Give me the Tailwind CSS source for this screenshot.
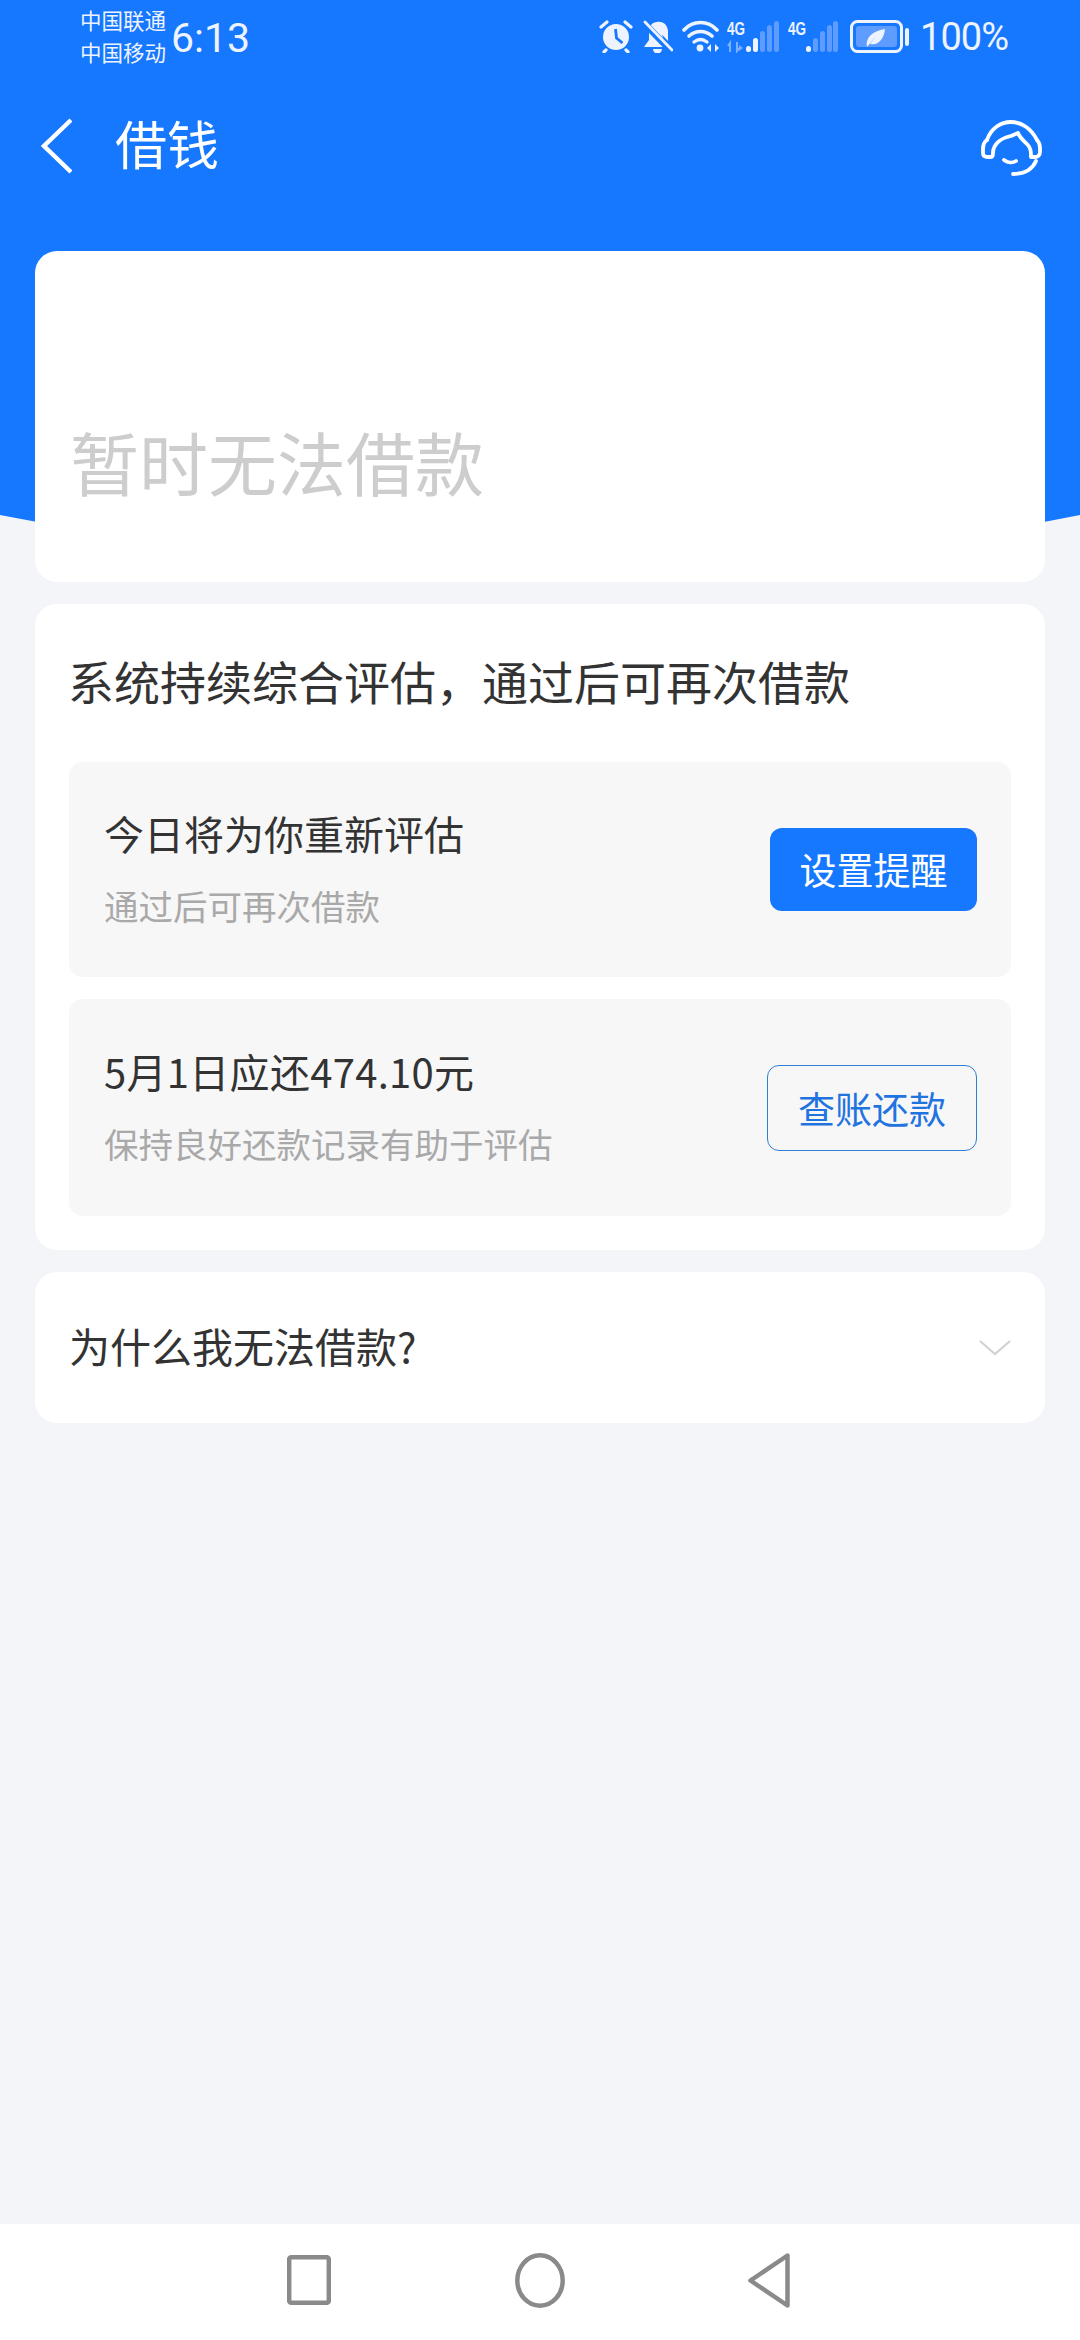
<!DOCTYPE html>
<html lang="zh"><head><meta charset="utf-8"><script src="https://cdn.jsdelivr.net/npm/@tailwindcss/browser@4"></script></head>
<body class="m-0">
<div class="relative w-[1080px] h-[2340px] overflow-hidden bg-[#f4f5f8] font-['Noto_Sans_CJK_SC',sans-serif] flex flex-col">
  <svg class="absolute left-0 top-0" width="1080" height="640" viewBox="0 0 1080 640"><path d="M0 0H1080V515Q540 623 0 515Z" fill="#1677ff"/></svg>

  <div class="relative flex-1 flex flex-col">
    <!-- status bar -->
    <div class="h-[75px] shrink-0 flex items-start pl-[80px] pr-[72px] text-[#eef4ff]">
      <div class="flex flex-col pt-[4px] text-[21.5px] leading-[32px] w-[91px] whitespace-nowrap"><span>中国联通</span><span>中国移动</span></div>
      <span class="font-['Roboto',sans-serif] text-[41px] leading-[44px] mt-[16px]">6:13</span>
      <div class="ml-auto flex items-center h-[34px] mt-[19px]">
        <svg width="34" height="34" viewBox="0 0 34 34" fill="#eef4ff"><circle cx="17" cy="18" r="13"/><path d="M2 8 8 3M32 8 26 3M7 31l-2 2M27 31l2 2" stroke="#eef4ff" stroke-width="3.200" stroke-linecap="round"/><path d="M16.500 10l1 9 6 5" fill="none" stroke="#1677ff" stroke-width="2.800"/></svg>
        <svg class="ml-[10px]" width="30" height="34" viewBox="0 0 30 34" fill="#eef4ff"><path d="M15 3c-6 0-9 4-9 10v8l-5 7h22Z"/><path d="M10 30h9a4.500 4.500 0 0 1-9 0Z"/><path d="M14 3c6-1 11 3 11 10v9L9 5Z"/><path d="M1 4 29 33" stroke="#1677ff" stroke-width="6.500"/><path d="M2 3 29 31" stroke="#eef4ff" stroke-width="2.800" stroke-linecap="round"/></svg>
        <svg class="ml-[9px]" width="38" height="34" viewBox="0 0 38 34" fill="none" stroke="#eef4ff" stroke-linecap="round"><path d="M2 11C11 1 26 1 35 11" stroke-width="3.600"/><path d="M7 17c7-6 16-6 23 0" stroke-width="3.600"/><path d="M12 23c4-3 9-3 13 0" stroke-width="3.400"/><circle cx="18" cy="29" r="3.400" fill="#eef4ff" stroke="none"/><path d="M29 25l-4 4 4 4ZM33 25l4 4-4 4Z" fill="#eef4ff" stroke="none"/></svg>
        <svg class="ml-[7px]" width="52" height="34" viewBox="0 0 52 34"><text x="0" y="16" font-family="Liberation Sans" font-size="18" font-weight="700" fill="#eef4ff" textLength="18" lengthAdjust="spacingAndGlyphs">4G</text><path d="M3 33V24l-2 3M10 23v9l2-3" fill="none" stroke="#7db0ff" stroke-width="2"/><path d="M12 26l4 3-4 3Z" fill="#7db0ff"/><rect x="19" y="27" width="5" height="6" rx="2.500" fill="#eef4ff"/><rect x="26" y="19" width="5" height="14" rx="2.500" fill="#eef4ff"/><rect x="33" y="12" width="5" height="21" rx="2.500" fill="#5e9cff"/><rect x="40" y="6" width="5" height="27" rx="2.500" fill="#5e9cff"/><rect x="47" y="2" width="5" height="31" rx="2.500" fill="#5e9cff"/></svg>
        <svg class="ml-[9px]" width="50" height="34" viewBox="0 0 50 34"><text x="0" y="16" font-family="Liberation Sans" font-size="18" font-weight="700" fill="#eef4ff" textLength="18" lengthAdjust="spacingAndGlyphs">4G</text><rect x="18" y="27" width="5" height="6" rx="2.500" fill="#eef4ff"/><rect x="25" y="19" width="5" height="14" rx="2.500" fill="#5e9cff"/><rect x="32" y="12" width="5" height="21" rx="2.500" fill="#5e9cff"/><rect x="39" y="6" width="5" height="27" rx="2.500" fill="#5e9cff"/><rect x="45" y="2" width="5" height="31" rx="2.500" fill="#5e9cff"/></svg>
        <svg class="ml-[12px]" width="60" height="34" viewBox="0 0 60 34"><rect x="1.500" y="2.500" width="50" height="30" rx="6" fill="none" stroke="#eef4ff" stroke-width="3"/><rect x="6" y="7" width="41" height="21" rx="3" fill="#5e9cff"/><rect x="55" y="9" width="4" height="18" rx="2" fill="#eef4ff"/><path d="M17 28c-2-9 5-16 18-18-1 10-7 17-15 15l6-8-9 11Z" fill="#eef4ff"/></svg>
        <span class="ml-[10px] font-['Roboto',sans-serif] text-[38px] tracking-[-1px] leading-[34px] mt-[2px]">100%</span>
      </div>
    </div>
    <!-- nav -->
    <div class="h-[150px] shrink-0 flex items-center pl-[41px] pr-[38px] text-white">
      <svg class="mb-[8px]" width="31" height="56" viewBox="0 0 31 56" fill="none" stroke="#fff" stroke-width="4.400"><path d="M30 2 3 28l27 26"/></svg>
      <span class="ml-[43px] text-[52px] leading-[76px] mb-[15px]">借钱</span>
      <svg class="ml-auto mb-[5px]" width="61" height="56" viewBox="0 0 61 56" fill="none" stroke="#fff" stroke-width="3.800" stroke-linecap="round" stroke-linejoin="round"><path d="M6 20C10 8 20 2 30 2S50 8 56 20"/><path d="M6 20C3 22 2 25 2 29V33C2 36 4 37 7 37H10C12 37 12 35 12 33C12 24 20 18 30 16L37 13C39 18 44 22 46 24C50 28 50 32 50 37H54C57 37 59 35 59 32V28C59 25 58 22 56 20"/><path d="M23 40C27 43 32 43 35 41"/><path d="M55 41C51 50 44 54 32 54"/></svg>
    </div>
    <!-- cards -->
    <div class="mt-[26px] mx-[35px] flex flex-col">
      <div class="h-[331px] bg-white rounded-[22px] px-[35px] flex items-end pb-[73px]">
        <span class="text-[69px] leading-[96px] text-[#cdcdcd]">暂时无法借款</span>
      </div>
      <div class="mt-[22px] h-[646px] bg-white rounded-[22px] px-[34px] pt-[43px]">
        <div class="text-[46px] leading-[66px] text-[#333] whitespace-nowrap -ml-[1px]">系统持续综合评估，通过后可再次借款</div>
        <div class="mt-[49px] h-[215px] rounded-[14px] bg-[#f7f7f8] flex items-center pl-[35px] pr-[34px]">
          <div class="flex flex-col mb-[5px]">
            <span class="text-[40px] leading-[56px] text-[#333]">今日将为你重新评估</span>
            <span class="mt-[20px] text-[34.500px] leading-[48px] text-[#a9a9a9]">通过后可再次借款</span>
          </div>
          <span class="ml-auto w-[207px] h-[83px] rounded-[12px] bg-[#1677ff] text-white text-[37px] leading-[83px] text-center">设置提醒</span>
        </div>
        <div class="mt-[22px] h-[217px] rounded-[14px] bg-[#f7f7f8] flex items-center pl-[35px] pr-[34px]">
          <div class="flex flex-col mb-[5px]">
            <span class="text-[40px] leading-[56px] text-[#333] tracking-[0.3px]">5月1日应还474.10元</span>
            <span class="mt-[20px] text-[34.500px] leading-[48px] text-[#a9a9a9]">保持良好还款记录有助于评估</span>
          </div>
          <span class="ml-auto w-[210px] h-[86px] rounded-[12px] border border-[#2f7fd6] text-[#1f74e0] text-[37px] leading-[84px] text-center">查账还款</span>
        </div>
      </div>
      <div class="mt-[22px] h-[151px] bg-white rounded-[22px] pl-[34px] pr-[34px] flex items-center">
        <span class="text-[41px] leading-[60px] text-[#333] mb-[5px]">为什么我无法借款?</span>
        <svg class="ml-auto" width="32" height="16" viewBox="0 0 32 16" fill="none" stroke="#d2d2d2" stroke-width="2.200"><path d="M1 1l15 13L31 1"/></svg>
      </div>
    </div>
  </div>
  <!-- bottom nav -->
  <div class="relative h-[116px] shrink-0 bg-white flex items-center pl-[287px] pb-[4px]">
    <svg width="44" height="50" viewBox="0 0 44 50" fill="none" stroke="#8a8a8a" stroke-width="4.500"><rect x="2.200" y="2.200" width="39.600" height="45.600" rx="2"/></svg>
    <svg class="ml-[184px]" width="50" height="55" viewBox="0 0 50 55" fill="none" stroke="#8a8a8a" stroke-width="4.500"><ellipse cx="25" cy="27.500" rx="22.700" ry="25.200"/></svg>
    <svg class="ml-[183px]" width="42" height="55" viewBox="0 0 42 55" fill="none" stroke="#8a8a8a" stroke-width="4.500" stroke-linejoin="round"><path d="M39.500 2.500V52.500L2.500 27.500Z"/></svg>
  </div>
</div>
</body></html>
